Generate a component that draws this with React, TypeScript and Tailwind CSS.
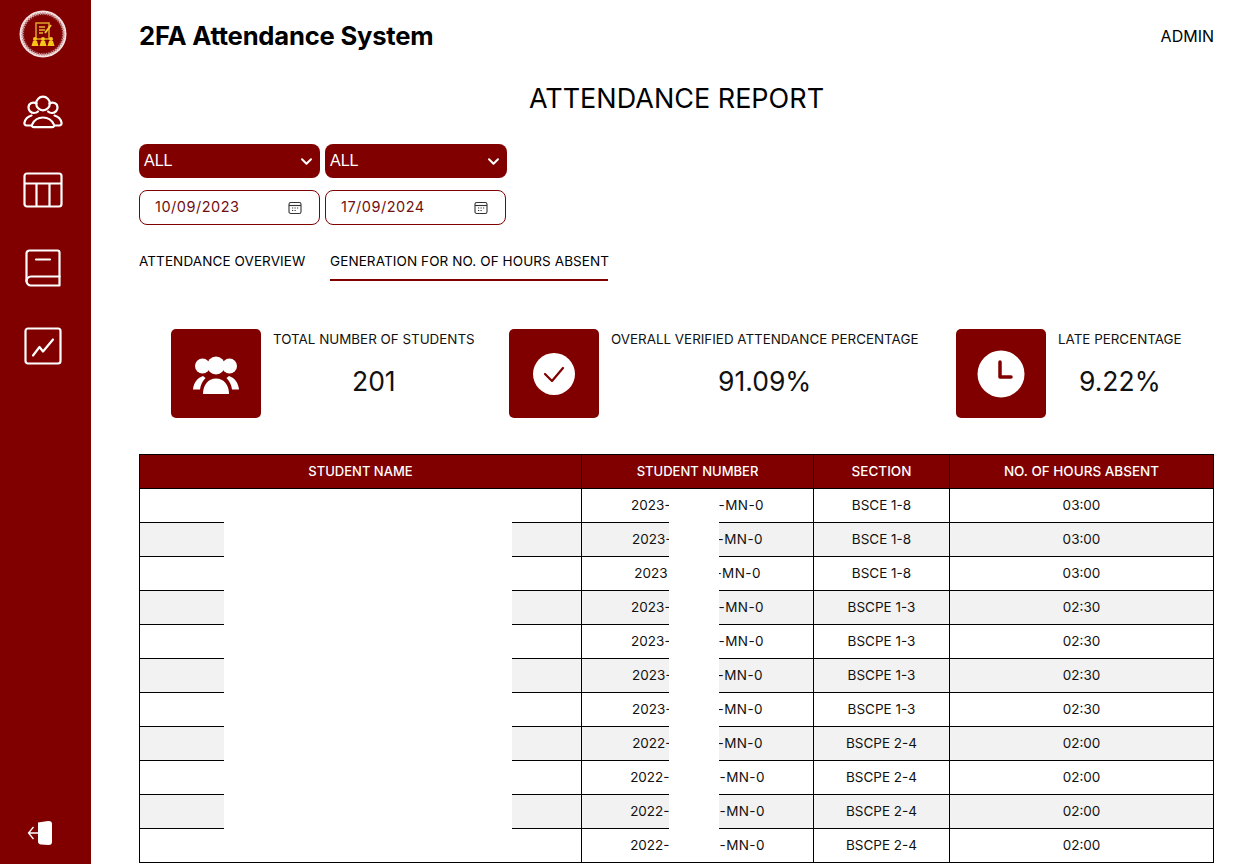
const font = "font-['Inter','Liberation_Sans',sans-serif]"

const rows = [
  ['2023-', '-MN-0', 'BSCE 1-8', '03:00', 'gap-[48px]'],
  ['2023-', '-MN-0', 'BSCE 1-8', '03:00', 'gap-[46px]'],
  ['2023', '-MN-0', 'BSCE 1-8', '03:00', 'gap-[48px]'],
  ['2023-', '-MN-0', 'BSCPE 1-3', '02:30', 'gap-[48px]'],
  ['2023-', '-MN-0', 'BSCPE 1-3', '02:30', 'gap-[48px]'],
  ['2023-', '-MN-0', 'BSCPE 1-3', '02:30', 'gap-[46px]'],
  ['2023-', '-MN-0', 'BSCPE 1-3', '02:30', 'gap-[46px]'],
  ['2022-', '-MN-0', 'BSCPE 2-4', '02:00', 'gap-[46px]'],
  ['2022-', '-MN-0', 'BSCPE 2-4', '02:00', 'gap-[50px]'],
  ['2022-', '-MN-0', 'BSCPE 2-4', '02:00', 'gap-[50px]'],
  ['2022-', '-MN-0', 'BSCPE 2-4', '02:00', 'gap-[50px]'],
]

function GroupOutline() {
  return (
    <svg viewBox="0 0 40 34" className="w-10 h-[34px]" fill="none" stroke="white" strokeWidth="2.2" strokeLinecap="round" strokeLinejoin="round">
      <circle cx="20" cy="8.500" r="6.800" />
      <path d="M13.500 8.500C10.500 6.500 5.500 8 5.500 12.500c0 3 2.500 5.500 5.500 5.500 1.500 0 3-.5 4-1.500" />
      <path d="M26.500 8.500C29.500 6.500 34.500 8 34.500 12.500c0 3-2.500 5.500-5.500 5.500-1.500 0-3-.5-4-1.500" />
      <path d="M11 32.200h18c1.800 0 2.500-1.200 1.800-2.800C29 25.500 25.500 22.500 20 22.500s-9 3-10.800 6.900C8.500 31 9.200 32.200 11 32.200z" />
      <path d="M8.500 20.500C5 21.500 2.200 24.500 1.500 27.500c-.4 1.800.5 3 2.300 3H8" />
      <path d="M31.500 20.500C35 21.500 37.800 24.500 38.500 27.500c.4 1.800-.5 3-2.300 3H32" />
    </svg>
  )
}

function TableIcon() {
  return (
    <svg viewBox="0 0 40 36" className="w-10 h-9" fill="none" stroke="white" strokeWidth="2.2" strokeLinejoin="round">
      <rect x="1.500" y="1.500" width="37" height="33" rx="2.500" />
      <path d="M1.500 11.500h37M13.500 11.500v23M26.500 11.500v23" />
    </svg>
  )
}

function BookIcon() {
  return (
    <svg viewBox="0 0 36 38" className="w-9 h-[38px]" fill="none" stroke="white" strokeWidth="2.200" strokeLinecap="round" strokeLinejoin="round">
      <path d="M1.500 32V4.500a3 3 0 0 1 3-3h28a2 2 0 0 1 2 2V36.500H6a4.500 4.500 0 0 1-4.500-4.500z" />
      <path d="M1.500 32A4.500 4.500 0 0 1 6 27.500h28.500" />
      <path d="M11 10.500h14" />
    </svg>
  )
}

function ChartIcon() {
  return (
    <svg viewBox="0 0 38 38" className="w-[38px] h-[38px]" fill="none" stroke="white" strokeWidth="2.200" strokeLinecap="round" strokeLinejoin="round">
      <rect x="1.500" y="1.500" width="35" height="35" rx="2.500" />
      <path d="M9 28.500l6.500-8.500 3.500 4.500 10-12" />
    </svg>
  )
}

function Logo() {
  return (
    <svg viewBox="0 0 48 48" className="w-12 h-12">
      <circle cx="24" cy="24" r="23.500" fill="#f3e3e3" />
      <circle cx="24" cy="24" r="20.500" fill="#7f0a0a" stroke="#c98f8f" strokeWidth="2.500" strokeDasharray="1.500 1" />
      <circle cx="24" cy="24" r="18" fill="#800000" />
      <rect x="17" y="13" width="13" height="16" fill="none" stroke="#e0a22a" strokeWidth="1.500" />
      <path d="M20 17h6M20 20h6M20 23h4" stroke="#e8b52c" strokeWidth="1.500" />
      <path d="M26 23l6-8" stroke="#f3c22e" strokeWidth="2" />
      <g fill="#f5c518">
        <circle cx="16" cy="29" r="2" />
        <circle cx="24" cy="29" r="2" />
        <circle cx="32" cy="29" r="2" />
        <path d="M12.500 36l1.500-5h4l1.500 5zM20.500 36l1.500-5h4l1.500 5zM28.500 36l1.500-5h4l1.500 5z" />
      </g>
    </svg>
  )
}

function LogoutIcon() {
  return (
    <svg viewBox="0 0 28 26" className="w-7 h-[26px]">
      <path d="M11 2.500l10-1.500q4-.4 4 3v18q0 3.400-4 3l-7-.6q-3-.3-3-3z" fill="white" />
      <path d="M11 13H1.500M6.500 7l-5 6 5 6" fill="none" stroke="white" strokeWidth="1.300" />
    </svg>
  )
}

function CalendarIcon() {
  return (
    <svg viewBox="0 0 14 14" className="w-[14px] h-[14px]" fill="none" stroke="#333" strokeWidth="1.100">
      <rect x="1" y="1.500" width="12" height="11" rx="1.800" />
      <path d="M1 4.500h12" />
      <path d="M4 7h1.200M6.500 7h1.200M9 7h1.200M4 9.500h1.200M6.500 9.500h1.200" strokeWidth="1.200" />
    </svg>
  )
}

function Chevron() {
  return (
    <svg viewBox="0 0 14 10" className="w-[13px] h-[9px]" fill="none" stroke="white" strokeWidth="2.200" strokeLinecap="round" strokeLinejoin="round">
      <path d="M2 2.500l5 5 5-5" />
    </svg>
  )
}

function Filter({ w }: { w: string }) {
  return (
    <div className={`${w} h-[34px] rounded-lg bg-[#800000] flex items-center justify-between pl-[5px] pr-[7px]`}>
      <span className="text-white text-base font-['Liberation_Sans',sans-serif]">ALL</span>
      <Chevron />
    </div>
  )
}

function DateBox({ value, w }: { value: string; w: string }) {
  return (
    <div className={`${w} h-[35px] rounded-lg border border-[#800000] bg-white flex items-center justify-between pl-[15px] pr-[17px]`}>
      <span className="text-[#701010] text-[14.500px] tracking-[0.5px] pb-[2px]">{value}</span>
      <CalendarIcon />
    </div>
  )
}

function Stat({ icon, label, value, className }: { icon: React.ReactNode; label: string; value: string; className: string }) {
  return (
    <div className={`flex items-start ${className}`}>
      <div className="w-[90px] h-[89px] shrink-0 rounded-[5px] bg-[#800000] flex items-center justify-center">{icon}</div>
      <div className="ml-3 flex flex-col items-center">
        <div className="text-[13.400px] leading-5 text-[#111] whitespace-nowrap">{label}</div>
        <div className="mt-[14px] text-[26.500px] leading-9 text-[#111]">{value}</div>
      </div>
    </div>
  )
}

export default function App() {
  return (
    <div className={`${font} flex h-[864px] w-[1260px] overflow-hidden bg-white text-black`}>
      <aside className="w-[91px] shrink-0 bg-[#800000] flex flex-col items-center pt-[10px] pb-[18px] pr-[5px]">
        <Logo />
        <div className="mt-[37px]"><GroupOutline /></div>
        <div className="mt-[43px]"><TableIcon /></div>
        <div className="mt-[41px]"><BookIcon /></div>
        <div className="mt-[40px]"><ChartIcon /></div>
        <div className="mt-auto -ml-1"><LogoutIcon /></div>
      </aside>

      <main className="flex-1 pl-12 pr-[46px] min-w-0">
        <header className="flex items-center justify-between h-[72px]">
          <h1 className="text-[25.600px] font-bold tracking-[-0.2px]">2FA Attendance System</h1>
          <span className="text-base">ADMIN</span>
        </header>

        <h2 className="text-center text-[27px] leading-[52px] h-[52px] pt-px">ATTENDANCE REPORT</h2>

        <div className="mt-[20px] flex gap-[5px]">
          <Filter w="w-[181px]" />
          <Filter w="w-[182px]" />
        </div>
        <div className="mt-3 flex gap-[5px]">
          <DateBox value="10/09/2023" w="w-[181px]" />
          <DateBox value="17/09/2024" w="w-[181px]" />
        </div>

        <nav className="mt-[18px] flex gap-6 text-[13.500px] tracking-[0.1px]">
          <div className="w-[167px] h-[38px] pt-[8px] whitespace-nowrap">ATTENDANCE OVERVIEW</div>
          <div className="w-[278px] h-[38px] pt-[8px] whitespace-nowrap border-b-2 border-[#800000]">GENERATION FOR NO. OF HOURS ABSENT</div>
        </nav>

        <section className="mt-[48px] flex">
          <Stat
            className="ml-8 w-[338px]"
            label="TOTAL NUMBER OF STUDENTS"
            value="201"
            icon={
              <svg viewBox="0 0 48 40" className="w-12 h-10" fill="white">
                <circle cx="10.500" cy="12" r="7.500" />
                <circle cx="37.500" cy="12" r="7.500" />
                <circle cx="24" cy="11.500" r="9" />
                <path d="M1 35.500c.5-6 4-11.500 10-13.500l2.500 2c-3 3-5 7-5.500 11.500zM47 35.500c-.5-6-4-11.500-10-13.500l-2.500 2c3 3 5 7 5.500 11.500z" />
                <path d="M11 40c0-9 5-15.500 13-15.500S37 31 37 40z" />
              </svg>
            }
          />
          <Stat
            className="w-[447px]"
            label="OVERALL VERIFIED ATTENDANCE PERCENTAGE"
            value="91.09%"
            icon={
              <svg viewBox="0 0 42 42" className="w-[42px] h-[42px]">
                <circle cx="21" cy="21" r="21" fill="white" />
                <path d="M12 21l7 7 11-13" fill="none" stroke="#800000" strokeWidth="2.200" strokeLinecap="round" strokeLinejoin="round" />
              </svg>
            }
          />
          <Stat
            className=""
            label="LATE PERCENTAGE"
            value="9.22%"
            icon={
              <svg viewBox="0 0 48 48" className="w-12 h-12">
                <circle cx="24" cy="24" r="23.500" fill="white" />
                <path d="M23 12v15h11" fill="none" stroke="#800000" strokeWidth="3.500" strokeLinecap="round" strokeLinejoin="round" />
              </svg>
            }
          />
        </section>

        <div className="relative mt-[36px]">
          <table className="w-[1074px] table-fixed border-collapse text-[13.500px]">
            <colgroup>
              <col className="w-[442px]" />
              <col className="w-[232px]" />
              <col className="w-[136px]" />
              <col className="w-[264px]" />
            </colgroup>
            <thead>
              <tr className="h-[34px] bg-[#800000] text-white">
                <th className="border border-black font-medium text-[13px]">STUDENT NAME</th>
                <th className="border border-black font-medium text-[13px]">STUDENT NUMBER</th>
                <th className="border border-black font-medium">SECTION</th>
                <th className="border border-black font-medium">NO. OF HOURS ABSENT</th>
              </tr>
            </thead>
            <tbody>
              {rows.map((r, i) => (
                <tr key={i} className={`h-[34px] text-center text-[#111] ${i % 2 ? 'bg-[#f2f2f2]' : 'bg-white'}`}>
                  <td className="border border-black" />
                  <td className="border border-black">
                    <div className={`flex items-center justify-center ${r[4]}`}>
                      <span>{r[0]}</span>
                      <span className="tracking-[0.4px]">{r[1]}</span>
                    </div>
                  </td>
                  <td className="border border-black">{r[2]}</td>
                  <td className="border border-black">{r[3]}</td>
                </tr>
              ))}
            </tbody>
          </table>
          {/* blanked-out cells */}
          <div className="absolute left-[85px] top-[35px] w-[288px] h-[373px] bg-white" />
          <div className="absolute left-[530px] top-[35px] w-[50px] h-[373px] bg-white" />
        </div>
      </main>
    </div>
  )
}
